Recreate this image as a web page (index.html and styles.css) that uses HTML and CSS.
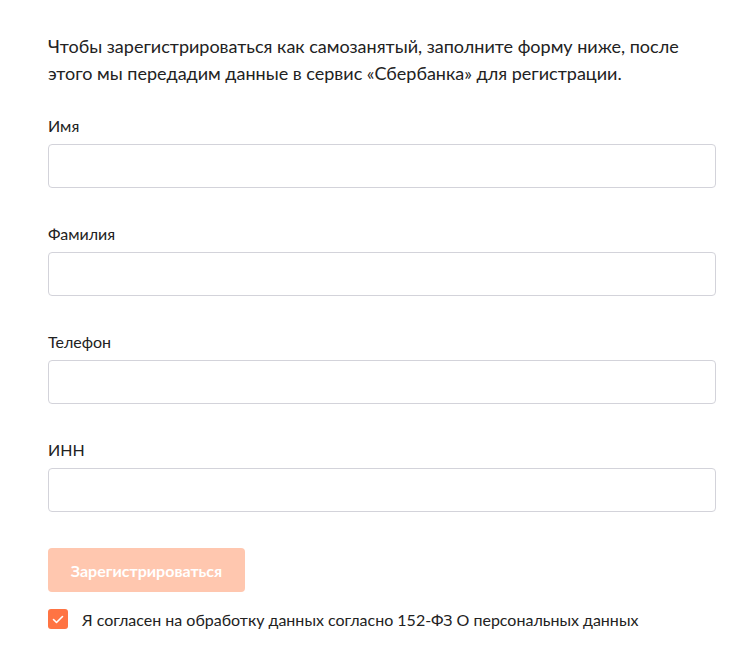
FILE: index.html
```html
<!DOCTYPE html>
<html lang="ru">
<head>
    <meta charset="UTF-8">
    <meta name="viewport" content="width=device-width, initial-scale=1.0">
    <title>Регистрация самозанятого</title>
    <link rel="stylesheet" href="styles.css">
</head>
<body>
    <div class="container">
        <p class="intro">Чтобы зарегистрироваться как самозанятый, заполните форму ниже, после этого мы передадим данные в сервис «Сбербанка» для регистрации.</p>

        <!-- Форма регистрации -->
        <form class="reg-form">
            <div class="field">
                <label for="first-name">Имя</label>
                <input type="text" id="first-name">
            </div>
            <div class="field">
                <label for="last-name">Фамилия</label>
                <input type="text" id="last-name">
            </div>
            <div class="field">
                <label for="phone">Телефон</label>
                <input type="text" id="phone">
            </div>
            <div class="field">
                <label for="inn">ИНН</label>
                <input type="text" id="inn">
            </div>

            <button type="button" class="submit" disabled>Зарегистрироваться</button>

            <label class="agree">
                <span class="check">
                    <svg width="12" height="9" viewBox="0 0 12 9"><path d="M1.5 4.5 L4.5 7.5 L10.5 1.5" fill="none" stroke="#fff" stroke-width="1.6" stroke-linecap="round" stroke-linejoin="round"/></svg>
                </span>
                Я согласен на обработку данных согласно 152-ФЗ О персональных данных
            </label>
        </form>
    </div>
</body>
</html>
```

FILE: styles.css
```css
body {
    font-family: Lato, "Open Sans", sans-serif;
    background-color: #ffffff;
    color: #222;
    margin: 0;
    padding: 0;
}

.container {
    padding: 33px 0 0 48px;
    width: 668px;
}

.intro {
    font-size: 18px;
    line-height: 27px;
    margin: 0 0 29px;
}

.field {
    display: flex;
    flex-direction: column;
    gap: 8px;
    margin-bottom: 36px;
}

.field label {
    font-size: 16px;
    line-height: 20px;
}

.field input {
    height: 44px;
    box-sizing: border-box;
    border: 1px solid #d3d3da;
    border-radius: 4px;
    padding: 0 12px;
    font-size: 16px;
    font-family: inherit;
}

.submit {
    display: block;
    width: 197px;
    height: 44px;
    background-color: #ffc7af;
    color: #fff;
    border: none;
    border-radius: 4px;
    font-family: inherit;
    font-size: 16px;
    font-weight: bold;
}

.agree {
    display: flex;
    align-items: center;
    gap: 14px;
    margin-top: 17px;
    font-size: 16px;
}

.check {
    width: 20px;
    height: 20px;
    border-radius: 3px;
    background-color: #ff7443;
    display: flex;
    justify-content: center;
    align-items: center;
}
```
